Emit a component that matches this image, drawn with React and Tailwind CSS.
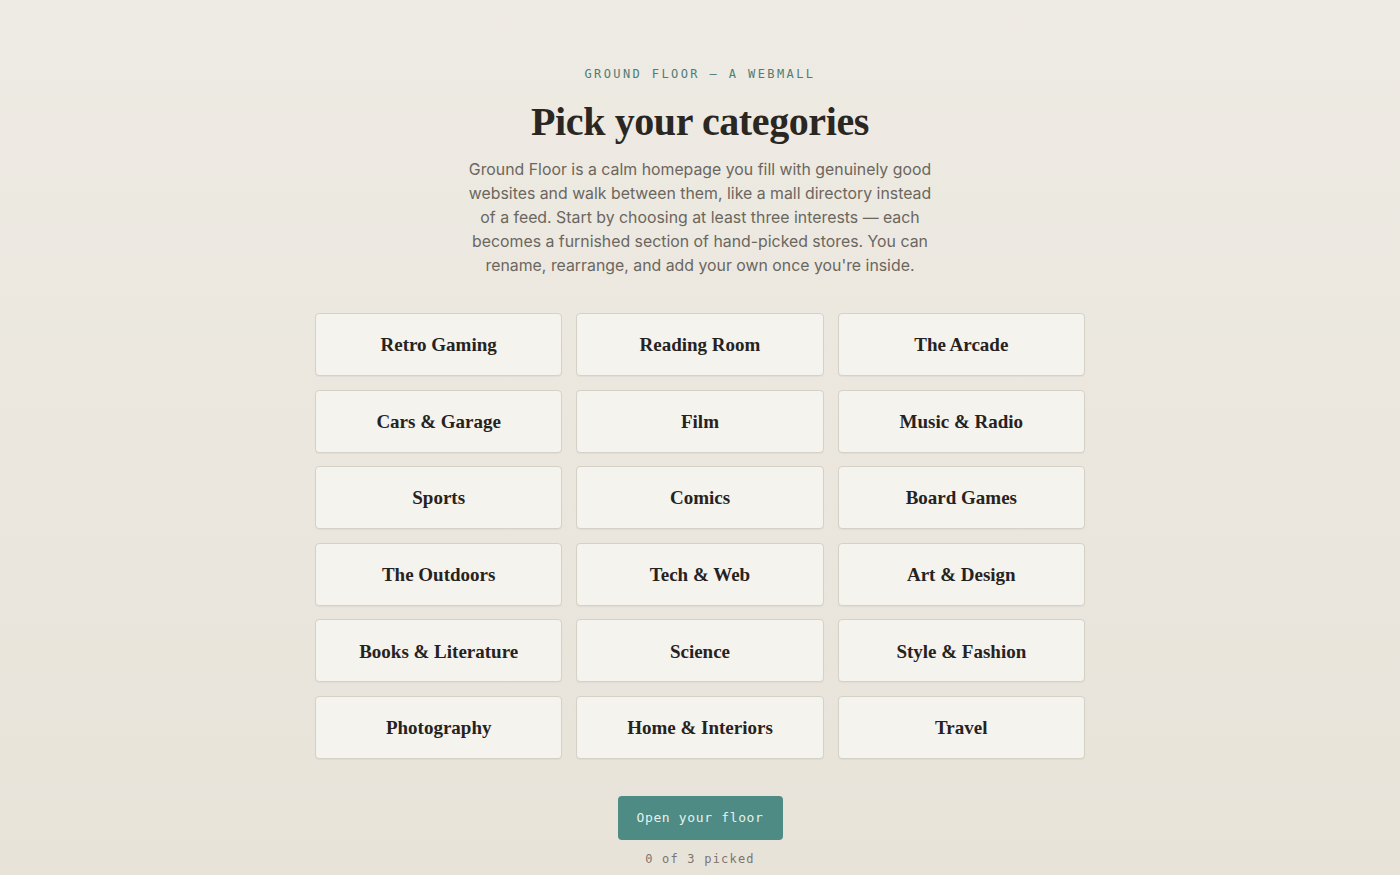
export default function App() {
  const cats = [
    "Retro Gaming", "Reading Room", "The Arcade",
    "Cars & Garage", "Film", "Music & Radio",
    "Sports", "Comics", "Board Games",
    "The Outdoors", "Tech & Web", "Art & Design",
    "Books & Literature", "Science", "Style & Fashion",
    "Photography", "Home & Interiors", "Travel",
  ];
  const serif = { fontFamily: '"Liberation Serif", "DejaVu Serif", serif' };
  return (
    <div className="min-h-[875px] w-full bg-gradient-to-b from-[#eeebe4] to-[#e8e3d9] flex flex-col items-center pt-[66px]">
      <div className="font-['DejaVu_Sans_Mono',monospace] text-[12px] leading-[16px] tracking-[0.2em] text-[#4f7d72]">
        GROUND FLOOR — A WEBMALL
      </div>
      <h1 className="mt-4 text-[40px] leading-[48px] font-semibold text-[#2a2723] tracking-[-0.01em]" style={serif}>
        Pick your categories
      </h1>
      <p className="mt-[12px] w-[476px] text-center font-['Inter',sans-serif] text-[15.85px] leading-[24px] text-[#6b665e]">
        Ground Floor is a calm homepage you fill with genuinely good websites and walk between them, like a mall directory instead of a feed. Start by choosing at least three interests — each becomes a furnished section of hand-picked stores. You can rename, rearrange, and add your own once you're inside.
      </p>
      <div className="mt-[35px] w-[770px] grid grid-cols-3 gap-x-[14px] gap-y-[13.6px]">
        {cats.map((c) => (
          <button
            key={c}
            className="h-[63px] pt-[2px] rounded-[4px] border border-[#d6d1c6] bg-[#f5f3ee] shadow-[0_1px_1px_rgba(0,0,0,0.04)] flex items-center justify-center text-[19px] font-semibold text-[#26231f]"
            style={serif}
          >
            {c}
          </button>
        ))}
      </div>
      <button className="mt-[37px] h-[44px] w-[165px] rounded-[4px] bg-[#4e8b84] text-[#e6f2ee] font-['DejaVu_Sans_Mono',monospace] text-[13px] tracking-[0.05em]">
        Open your floor
      </button>
      <div className="mt-[11px] font-['DejaVu_Sans_Mono',monospace] text-[12px] leading-[16px] tracking-[0.1em] text-[#7a766f]">
        0 of 3 picked
      </div>
    </div>
  );
}
